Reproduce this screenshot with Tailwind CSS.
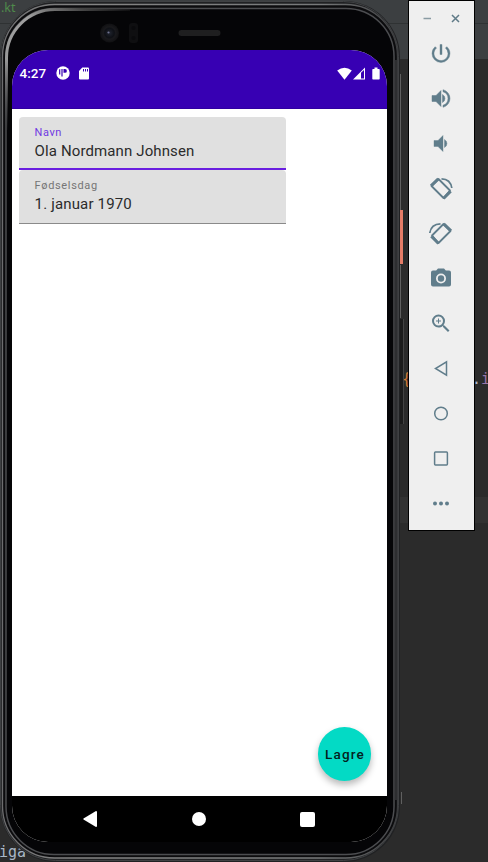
<!DOCTYPE html>
<html lang="no">
<head>
<meta charset="utf-8">
<title>Android Emulator</title>
<script src="https://cdn.jsdelivr.net/npm/@tailwindcss/browser@4"></script>
</head>
<body class="bg-[#2b2b2b]">
<div class="relative w-[488px] h-[862px] overflow-hidden bg-[#2b2b2b] font-[Roboto,sans-serif]">
  <!-- editor behind the emulator -->
  <div class="h-[59px] bg-[#3c3f41] pt-[23px]"><div class="h-px bg-[#2f3233]"></div></div>
  <div class="absolute left-0 top-[497px] w-full h-[26px] bg-[#323232]"></div>
  <div class="absolute left-[1px] top-0 text-[12.5px] leading-[16px] text-[#4f8a4b] font-['Noto_Sans',sans-serif]">.kt</div>
  <div class="absolute left-[-1px] top-[843px] text-[15px] leading-[18px] text-[#a9b7c6] font-['DejaVu_Sans_Mono',monospace]">iga</div>
  <div class="absolute left-[402px] top-[370px] text-[15px] leading-[18px] text-[#cc7832] font-['DejaVu_Sans_Mono',monospace]">{</div>
  <div class="absolute left-[472px] top-[370px] text-[15px] leading-[18px] text-[#a9b7c6] font-['DejaVu_Sans_Mono',monospace]">.<span class="text-[#9876aa]">i</span></div>

  <!-- phone body -->
  <svg class="absolute left-0 top-0" width="408" height="862" viewBox="0 0 408 862" fill="none">
    <defs>
      <linearGradient id="shine" x1="0" y1="160" x2="130" y2="0" gradientUnits="userSpaceOnUse"><stop offset="0" stop-color="#4c4d50" stop-opacity="0"/><stop offset=".12" stop-color="#4c4d50" stop-opacity="0"/><stop offset=".4" stop-color="#999"/><stop offset=".62" stop-color="#a0a0a0"/><stop offset=".82" stop-color="#444"/><stop offset="1" stop-color="#333" stop-opacity="0"/></linearGradient>
      <linearGradient id="edge" x1="0" y1="0" x2="400" y2="0" gradientUnits="userSpaceOnUse"><stop offset="0" stop-color="#6c6c6e"/><stop offset=".2" stop-color="#858585"/><stop offset=".8" stop-color="#77797a"/><stop offset="1" stop-color="#3a3b3d"/></linearGradient>
      <radialGradient id="lens"><stop offset="0" stop-color="#20242f"/><stop offset=".5" stop-color="#0e1015"/><stop offset=".65" stop-color="#19191c"/><stop offset="1" stop-color="#101012"/></radialGradient>
    </defs>
    <path d="M400.500 74V210M400.500 265V318M401.500 792V804" stroke="#606060"/>
    <rect x="400" y="210" width="3" height="54" fill="#e57c67"/>
    <rect x="399" y="319" width="4" height="105" fill="#1c1c1c"/><path d="M403.500 319V424" stroke="#444"/>
    <rect x="0" y="1" width="400" height="861" rx="56" fill="#202123"/>
    <rect x=".5" y="1.500" width="398" height="859" rx="55" stroke="#3f4143"/>
    <rect x="2.500" y="4.500" width="395" height="853.500" rx="52" fill="#0c0c0e" stroke="url(#edge)" stroke-width="1.300"/>
    <rect x="6" y="8.500" width="388" height="846" rx="48" fill="#050507" stroke="#4c4d50" stroke-width="1.500"/>
    <path d="M6.500 130V58A48.500 48.500 0 0 1 55 9.500H130" stroke="url(#shine)" stroke-width="3"/>
    <path d="M396 60V800" stroke="#2d2e30" stroke-width="2.500"/>
    <circle cx="109.500" cy="33" r="9.500" fill="url(#lens)"/>
    <circle cx="108.500" cy="32.500" r="1.100" fill="#6f7391"/>
    <rect x="129" y="23" width="9" height="20" rx="3" fill="#0f0f11"/>
    <circle cx="133.500" cy="28" r="2" fill="#0a0a0c"/><circle cx="133.500" cy="38" r="2" fill="#0a0a0c"/>
    <rect x="178.500" y="30" width="42" height="6" rx="3" fill="#1f1f20"/>
  </svg>

  <!-- device screen -->
  <main class="absolute left-[12px] top-[50px] w-[375px] h-[792px] rounded-[36px] overflow-hidden bg-white flex flex-col">
    <header class="h-[59px] shrink-0 bg-[#3700b3] border-b border-[#3000a0] text-white">
      <div class="flex items-center h-[46px] pl-[7.500px] pr-[7.500px]">
        <span class="w-[36px] text-[13.5px] font-medium leading-none pt-px">4:27</span>
        <svg class="shrink-0" width="14" height="14" viewBox="0 0 14 14"><circle cx="7" cy="7" r="6.700" fill="#fff"/><path d="M3.700 3.300V8.500M6 3V10.500" stroke="#3700b3" stroke-width="1.200" fill="none"/><path d="M7.500 3H9A1.900 1.900 0 0 1 9 6.800H7.500Z" fill="#3700b3"/></svg>
        <svg class="ml-[9px] shrink-0" width="10" height="13" viewBox="0 0 10 13"><path fill="#fff" d="M3.300.500H9Q10 .500 10 1.500V11.500Q10 12.500 9 12.500H1Q0 12.500 0 11.500V4Z"/><path d="M4.500 2V4.500M6.500 2V4.500M8.500 2V4.500" stroke="#3700b3"/></svg>
        <span class="grow"></span>
        <svg class="shrink-0" width="15" height="13" viewBox="0 0 15 13"><path fill="#fff" d="M7.500 12.700.200 3.500Q7.500-2.200 14.800 3.500Z"/></svg>
        <svg class="ml-px shrink-0" width="12" height="13" viewBox="0 0 12 13"><path fill="#fff" fill-rule="evenodd" d="M0 12.500 12 .500V12.500ZM8 5.700V11.500H11V3Z"/></svg>
        <svg class="ml-[7px] shrink-0" width="8" height="13" viewBox="0 0 8 13"><path fill="#fff" d="M2.500.500H5.500V2H7Q7.700 2 7.700 2.700V11.800Q7.700 12.500 7 12.500H1Q.300 12.500.300 11.800V2.700Q.300 2 1 2H2.500Z"/></svg>
      </div>
    </header>
    <section class="grow pt-[8px] pl-[7.400px] flex flex-col">
      <div class="w-[267px] h-[53px] bg-[#e0e0e0] rounded-t-[4px] border-b-2 border-[#6a1fe0] pl-[15.200px] pt-[8px]">
        <div class="text-[11px] leading-[15px] tracking-[0.55px] text-[#7038e2]">Navn</div>
        <div class="text-[15px] leading-[18px] mt-[2px] tracking-[0.12px] text-[#2b2b2b] whitespace-nowrap">Ola Nordmann Johnsen</div>
      </div>
      <div class="w-[267px] h-[54px] bg-[#e0e0e0] rounded-t-[4px] border-b border-[#8a8a8a] pl-[15.200px] pt-[8px]">
        <div class="text-[11px] leading-[15px] tracking-[0.65px] text-[#757575]">Fødselsdag</div>
        <div class="text-[15px] leading-[18px] mt-[2px] tracking-[0.16px] text-[#2b2b2b] whitespace-nowrap">1. januar 1970</div>
      </div>
      <div class="mt-auto mb-[15.500px] mr-[15.800px] self-end w-[53.500px] h-[53.500px] rounded-full bg-[#03dac5] flex items-center justify-center pl-px text-[13.5px] font-medium tracking-[1.150px] text-[#04211e] shadow-[0_4px_7px_rgba(0,0,0,0.28)]">Lagre</div>
    </section>
    <nav class="h-[46px] shrink-0 bg-black flex items-center pl-[71px]">
      <svg width="14" height="16" viewBox="0 0 14 16"><path fill="#fff" d="M13 0Q14 0 14 1V15Q14 16 13 16L.500 8.600Q0 8 .500 7.400Z"/></svg>
      <div class="ml-[95px] w-[14px] h-[14px] rounded-full bg-white"></div>
      <div class="ml-[93.500px] w-[15px] h-[15px] rounded-[2px] bg-white"></div>
    </nav>
  </main>

  <!-- emulator toolbar -->
  <aside class="absolute left-[408px] top-0 w-[67px] h-[531px] bg-[#efefef] border border-black text-[#607d8b] flex flex-col items-center">
    <div class="flex items-center h-[29.500px] pt-[5px] gap-[19px] pr-[.5px]">
      <svg width="9" height="9" viewBox="0 0 9 9"><path d="M.500 4.500H8" stroke="#8a9ba3" stroke-width="1.500"/></svg>
      <svg width="9" height="9" viewBox="0 0 9 9"><path d="M1 1 8 8M8 1 1 8" stroke="#5f7a87" stroke-width="1.500"/></svg>
    </div>
    <div class="flex flex-col pr-px *:h-[45px] *:w-[24px]">
      <svg viewBox="0 0 24 24" fill="currentColor"><path d="M13 3h-2v10h2V3zm4.830 2.170-1.420 1.420A6.920 6.920 0 0 1 19 12a7 7 0 1 1-11.420-5.420L6.170 5.170A8.932 8.932 0 0 0 3 12a9 9 0 0 0 18 0c0-2.740-1.230-5.180-3.170-6.830z" stroke="currentColor" stroke-width=".4"/></svg>
      <svg viewBox="0 0 24 24" fill="currentColor"><path d="M3 9v6h4l5 5V4L7 9H3zm10.500-1v8a4.500 4.500 0 0 0 0-8zM14 3.230v2.060a7 7 0 0 1 0 13.420v2.060a9 9 0 0 0 0-17.540z" stroke="currentColor" stroke-width=".5"/></svg>
      <svg viewBox="0 0 24 24" fill="currentColor"><path d="M5 9v6h4l5 5V4L9 9H5zM15.500 8v8a4.500 4.500 0 0 0 0-8z" stroke="currentColor" stroke-width=".4"/></svg>
      <svg viewBox="0 0 24 24" fill="none" stroke="currentColor"><g stroke-width="1.800" stroke-linejoin="round"><path d="M9.500 2.500 21 14 14.500 21.500 2.500 9.500Z"/><path d="M2 9.300 9.300 2.300M14.500 22 21.700 14.700" stroke-width="3"/><path d="M12.500 2.300Q21.500 2.500 22.800 11.500" stroke-width="1.700"/></g></svg>
      <svg viewBox="0 0 24 24" fill="none" stroke="currentColor"><g stroke-width="1.800" stroke-linejoin="round"><path d="M14.500 2.500 3 14 9.500 21.500 21.500 9.500Z"/><path d="M22 9.300 14.700 2.300M9.500 22 2.300 14.700" stroke-width="3"/><path d="M11.500 2.300Q2 2.500.800 11.500" stroke-width="1.700"/></g></svg>
      <svg viewBox="0 0 24 24" fill="currentColor"><circle cx="12" cy="12" r="3.200"/><path d="M9 2 7.170 4H4a2 2 0 0 0-2 2v12a2 2 0 0 0 2 2h16a2 2 0 0 0 2-2V6a2 2 0 0 0-2-2h-3.170L15 2H9zm3 15a5 5 0 1 1 0-10 5 5 0 0 1 0 10z"/></svg>
      <svg viewBox="0 0 24 24" fill="currentColor"><path d="M15.500 14h-.790l-.280-.270A6.471 6.471 0 0 0 16 9.500 6.500 6.500 0 1 0 9.500 16c1.610 0 3.090-.590 4.230-1.570l.270.280v.790l5 4.990L20.490 19l-4.990-5zm-6 0a4.500 4.500 0 1 1 0-9 4.500 4.500 0 0 1 0 9zm2.500-4h-2v2H9v-2H7V9h2V7h1v2h2v1z"/></svg>
      <svg viewBox="0 0 24 24" fill="none" stroke="currentColor" stroke-width="1.500"><path d="M17.500 5.300V18.700L6.500 12Z"/></svg>
      <svg viewBox="0 0 24 24" fill="none" stroke="currentColor" stroke-width="1.500"><circle cx="12" cy="12" r="6.300"/></svg>
      <svg viewBox="0 0 24 24" fill="none" stroke="currentColor" stroke-width="1.500"><rect x="5.600" y="5.600" width="12.800" height="12.800" rx=".8"/></svg>
      <svg viewBox="0 0 24 24" fill="currentColor"><circle cx="6" cy="12" r="2"/><circle cx="12" cy="12" r="2"/><circle cx="18" cy="12" r="2"/></svg>
    </div>
  </aside>
</div>
</body>
</html>
